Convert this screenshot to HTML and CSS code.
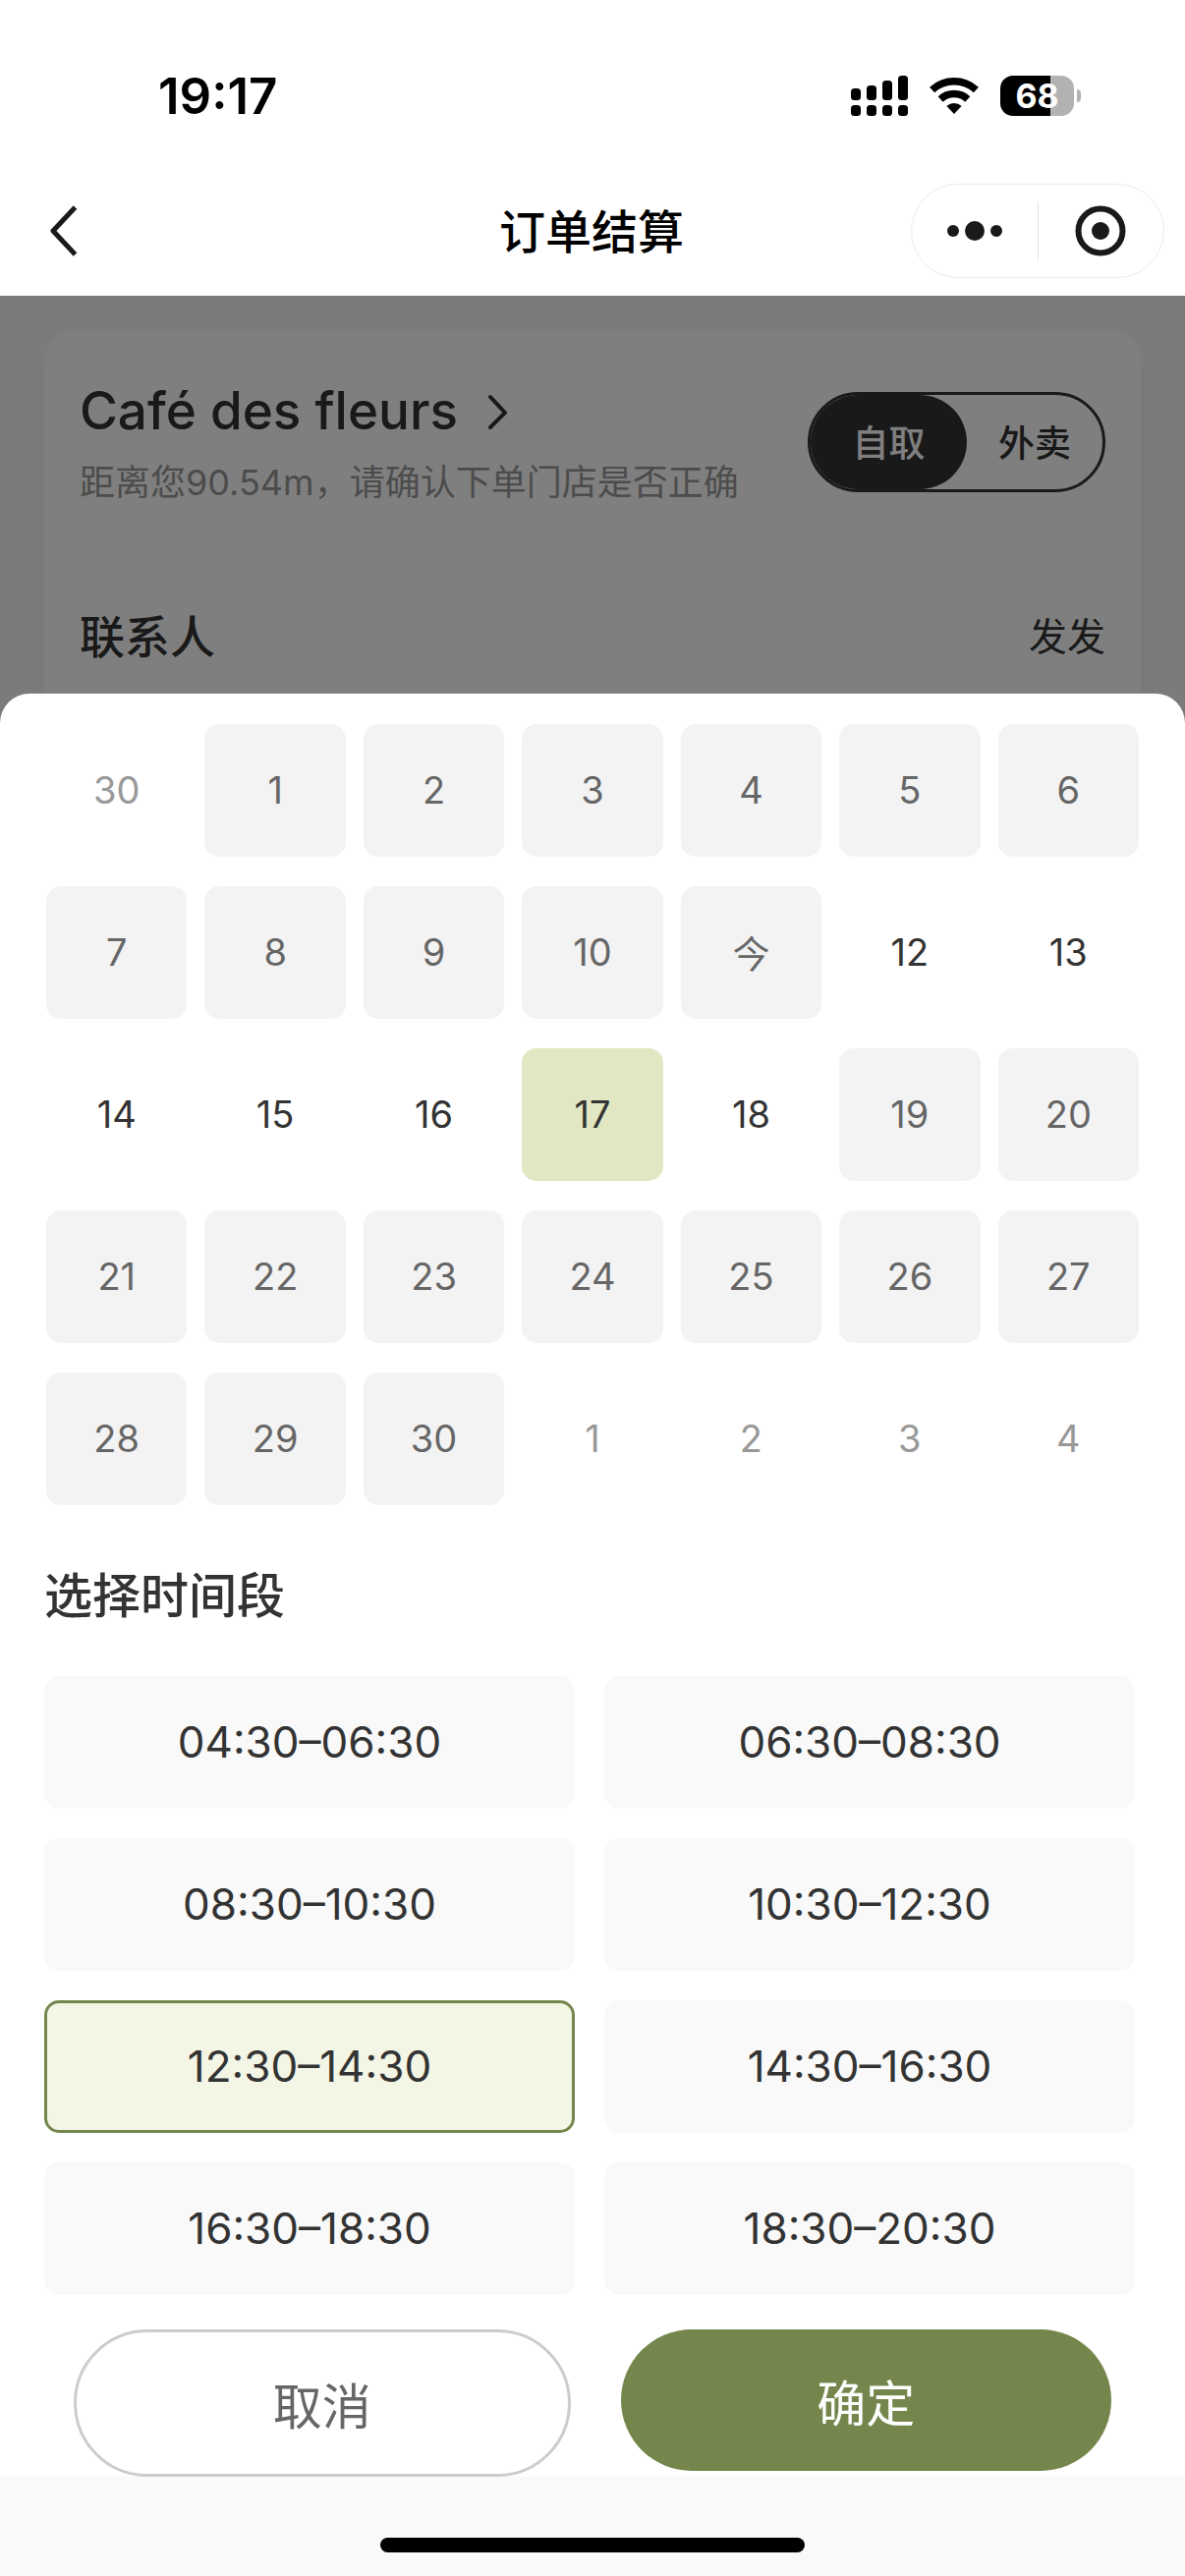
FILE: index.html
```html
<!DOCTYPE html>
<html lang="zh-CN">
<head>
  <meta charset="UTF-8" />
  <meta name="viewport" content="width=device-width, initial-scale=1.0" />
  <title>订单结算</title>
  <link rel="stylesheet" href="styles.css">
</head>
<body>

  <header class="top">
    <div class="status-bar">
      <span class="time">19:17</span>
      <div class="status-icons">
        <svg class="signal" width="58" height="41" viewBox="0 0 58 41">
          <rect x="0" y="13" width="10" height="12" rx="3.5" />
          <rect x="16" y="10" width="10" height="15" rx="3.5" />
          <rect x="32" y="5" width="10" height="20" rx="3.5" />
          <rect x="48" y="0" width="10" height="25" rx="3.5" />
          <rect x="0" y="30" width="10" height="11" rx="3.5" />
          <rect x="16" y="30" width="10" height="11" rx="3.5" />
          <rect x="32" y="30" width="10" height="11" rx="3.5" />
          <rect x="48" y="30" width="10" height="11" rx="3.5" />
        </svg>
        <svg class="wifi" width="50" height="37" viewBox="0 0 50 37">
          <path d="M2.6 12.5 A33.2 33.2 0 0 1 47.4 12.5" fill="none" stroke="#000" stroke-width="7.5" />
          <path d="M11.2 21.9 A20.5 20.5 0 0 1 38.8 21.9" fill="none" stroke="#000" stroke-width="7.5" />
          <path d="M25 37 L17.4 29 A11 11 0 0 1 32.6 29 Z" />
        </svg>
        <div class="battery">
          <span class="battery-body">68</span>
          <span class="battery-cap"></span>
        </div>
      </div>
    </div>

    <nav class="nav-bar">
      <button class="back" aria-label="返回">
        <svg width="28" height="52" viewBox="0 0 28 52">
          <path d="M25.5 2 L3 26 L25.5 50" fill="none" stroke="#1a1a1a" stroke-width="5" stroke-linejoin="round" />
        </svg>
      </button>
      <h1 class="nav-title">订单结算</h1>
      <div class="capsule">
        <button class="capsule-btn" aria-label="更多">
          <svg width="56" height="20" viewBox="0 0 56 20">
            <circle cx="6" cy="10" r="6" />
            <circle cx="28" cy="10" r="10" />
            <circle cx="50" cy="10" r="6" />
          </svg>
        </button>
        <button class="capsule-btn" aria-label="关闭">
          <svg width="52" height="52" viewBox="0 0 52 52">
            <circle cx="26" cy="26" r="22.5" fill="none" stroke="#1a1a1a" stroke-width="6" />
            <circle cx="26" cy="26" r="9" />
          </svg>
        </button>
      </div>
    </nav>
  </header>

  <main class="order">
    <section class="card">
      <div class="store">
        <div class="store-info">
          <h2 class="store-name">
            Café des fleurs
            <svg width="22" height="38" viewBox="0 0 22 38">
              <path d="M3 5 L18 21 L3 36" fill="none" stroke="#333" stroke-width="4" stroke-linecap="round" stroke-linejoin="round" />
            </svg>
          </h2>
          <p class="store-distance">距离您90.54m，请确认下单门店是否正确</p>
        </div>
        <div class="toggle">
          <button class="toggle-item active">自取</button>
          <button class="toggle-item">外卖</button>
        </div>
      </div>
      <div class="contact">
        <span class="contact-label">联系人</span>
        <span class="contact-name">发发</span>
      </div>
    </section>
    <div class="mask"></div>
  </main>

  <section class="sheet">
    <div class="calendar">
      <button class="day other" disabled>30</button>
      <button class="day" disabled>1</button>
      <button class="day" disabled>2</button>
      <button class="day" disabled>3</button>
      <button class="day" disabled>4</button>
      <button class="day" disabled>5</button>
      <button class="day" disabled>6</button>
      <button class="day" disabled>7</button>
      <button class="day" disabled>8</button>
      <button class="day" disabled>9</button>
      <button class="day" disabled>10</button>
      <button class="day" disabled>今</button>
      <button class="day">12</button>
      <button class="day">13</button>
      <button class="day">14</button>
      <button class="day">15</button>
      <button class="day">16</button>
      <button class="day selected">17</button>
      <button class="day">18</button>
      <button class="day" disabled>19</button>
      <button class="day" disabled>20</button>
      <button class="day" disabled>21</button>
      <button class="day" disabled>22</button>
      <button class="day" disabled>23</button>
      <button class="day" disabled>24</button>
      <button class="day" disabled>25</button>
      <button class="day" disabled>26</button>
      <button class="day" disabled>27</button>
      <button class="day" disabled>28</button>
      <button class="day" disabled>29</button>
      <button class="day" disabled>30</button>
      <button class="day other" disabled>1</button>
      <button class="day other" disabled>2</button>
      <button class="day other" disabled>3</button>
      <button class="day other" disabled>4</button>
    </div>

    <h2 class="slots-title">选择时间段</h2>
    <div class="slots">
      <button class="slot">04:30–06:30</button>
      <button class="slot">06:30–08:30</button>
      <button class="slot">08:30–10:30</button>
      <button class="slot">10:30–12:30</button>
      <button class="slot selected">12:30–14:30</button>
      <button class="slot">14:30–16:30</button>
      <button class="slot">16:30–18:30</button>
      <button class="slot">18:30–20:30</button>
    </div>

    <div class="actions">
      <button class="btn btn-cancel">取消</button>
      <button class="btn btn-confirm">确定</button>
    </div>

    <div class="safe-area">
      <span class="home-indicator"></span>
    </div>
  </section>

  <script>
    // 同一组里只保留一个选中项
    function bindGroup(selector, name) {
      const items = document.querySelectorAll(selector);
      items.forEach(item => {
        item.addEventListener('click', () => {
          items.forEach(other => other.classList.remove(name));
          item.classList.add(name);
        });
      });
    }

    bindGroup('.toggle-item', 'active');
    bindGroup('.day', 'selected');
    bindGroup('.slot', 'selected');
  </script>

</body>
</html>
```
FILE: styles.css
```css
* {
  box-sizing: border-box;
}

body {
  margin: 0;
  min-height: 100vh;
  display: flex;
  flex-direction: column;
  background: #f7f7f7;
  color: #333;
  font-family: Inter, "Noto Sans CJK SC", sans-serif;
}

h1,
h2,
p {
  margin: 0;
  font-weight: 500;
}

button {
  margin: 0;
  padding: 0;
  border: 0;
  background: none;
  color: inherit;
  font-family: inherit;
}

svg {
  display: block;
}

/* 状态栏 */
.top {
  background: #fff;
}

.status-bar {
  display: flex;
  justify-content: space-between;
  align-items: center;
  height: 168px;
  padding: 27px 106px 0 161px;
}

.time {
  color: #000;
  font-size: 51px;
  font-weight: 600;
}

.status-icons {
  display: flex;
  align-items: center;
  gap: 22px;
}

.battery {
  display: flex;
  align-items: center;
  gap: 3px;
}

.battery-body {
  width: 75px;
  height: 41px;
  border-radius: 13px;
  background: linear-gradient(to right, #000 68%, #b2b2b2 68%);
  color: #fff;
  font-size: 34px;
  font-weight: 700;
  line-height: 41px;
  text-align: center;
}

.battery-cap {
  width: 4px;
  height: 13px;
  border-radius: 0 4px 4px 0;
  background: #b2b2b2;
}

/* 导航栏 */
.nav-bar {
  display: grid;
  grid-template-columns: 1fr auto 1fr;
  align-items: center;
  height: 133px;
  padding: 0 21px 0 51px;
}

.back {
  justify-self: start;
}

.nav-title {
  margin: 0 32px 4px 0;
  color: #000;
  font-size: 47px;
}

.capsule {
  justify-self: end;
  display: flex;
  width: 258px;
  height: 96px;
  border: 1px solid #ebebeb;
  border-radius: 48px;
}

.capsule-btn {
  flex: 1;
  display: flex;
  justify-content: center;
  align-items: center;
  fill: #1a1a1a;
}

.capsule-btn + .capsule-btn {
  margin: 18px 0;
  border-left: 1px solid #e0e0e0;
}

/* 订单卡片 */
.order {
  position: relative;
  flex: 1;
  padding: 36px 45px;
}

.card {
  padding: 48px 36px;
  border-radius: 30px;
  background: #fff;
  box-shadow: 0 9px 9px 0 rgba(0, 0, 0, 0.03);
}

.store {
  display: flex;
  justify-content: space-between;
  align-items: center;
}

.store-name {
  display: flex;
  align-items: center;
  gap: 30px;
  font-size: 53px;
  line-height: 66px;
}

.store-distance {
  margin-top: 10px;
  color: #999;
  font-size: 36px;
  font-weight: 400;
  line-height: 60px;
}

.toggle {
  display: flex;
  width: 303px;
  height: 102px;
  margin-bottom: 6px;
  border: 3px solid #333;
  border-radius: 51px;
}

.toggle-item {
  flex: 1;
  padding-bottom: 3px;
  border-radius: 48px;
  font-size: 37px;
  font-weight: 500;
}

.toggle-item.active {
  flex: none;
  width: 159px;
  background: #333;
  color: #fff;
}

.contact {
  display: flex;
  justify-content: space-between;
  align-items: center;
  margin-top: 94px;
}

.contact-label {
  font-size: 46px;
  font-weight: 500;
  line-height: 66px;
}

.contact-name {
  font-size: 39px;
  line-height: 60px;
}

.mask {
  position: absolute;
  inset: 0;
  background: rgba(0, 0, 0, 0.5);
}

/* 时间选择弹层 */
.sheet {
  position: fixed;
  right: 0;
  bottom: 0;
  left: 0;
  padding-top: 31px;
  border-radius: 30px 30px 0 0;
  background: #fff;
}

.calendar {
  display: grid;
  grid-template-columns: repeat(7, 1fr);
  gap: 30px 18px;
  padding: 0 47px;
}

.day {
  height: 135px;
  padding-bottom: 2px;
  border-radius: 15px;
  font-size: 38px;
}

.day:disabled {
  background: #f3f3f3;
  color: #666;
}

.day.other {
  background: none;
  color: #999;
}

.day.selected {
  background: #e0e7c2;
}

.slots-title {
  margin: 57px 45px 45px;
  font-size: 49px;
  line-height: 72px;
}

.slots {
  display: grid;
  grid-template-columns: 1fr 1fr;
  gap: 30px;
  padding: 0 51px 0 45px;
}

.slot {
  height: 135px;
  padding-bottom: 2px;
  border-radius: 15px;
  background: #f9f9f9;
  font-size: 44px;
}

.slot.selected {
  border: 3px solid #75864c;
  background: #f3f5e5;
}

.actions {
  display: flex;
  align-items: flex-start;
  gap: 51px;
  padding: 35px 75px 0;
}

.btn {
  flex: 1;
  box-sizing: content-box;
  height: 144px;
  border-radius: 75px;
  font-size: 50px;
}

.btn-cancel {
  border: 3px solid #ccc;
  color: #666;
}

.btn-confirm {
  background: #75864c;
  color: #fff;
}

.safe-area {
  display: flex;
  justify-content: center;
  align-items: flex-end;
  height: 101px;
  padding-bottom: 24px;
  background: #f9f9f9;
}

.home-indicator {
  width: 432px;
  height: 15px;
  border-radius: 8px;
  background: #000;
}
```
